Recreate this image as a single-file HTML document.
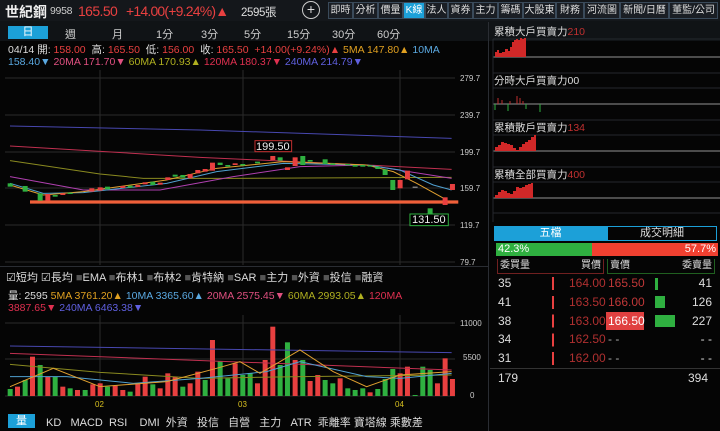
<!DOCTYPE html>
<html><head><meta charset="utf-8"><style>
*{margin:0;padding:0;box-sizing:border-box}
body{width:720px;height:431px;background:#050505;overflow:hidden;position:relative;font-family:"Liberation Sans","Noto Sans CJK TC",sans-serif;color:#ddd}
.a{position:absolute;white-space:nowrap}
.btn{position:absolute;top:2px;height:17px;border:1px solid #3a4a5a;background:#1a1e24;color:#ddd;font-size:10px;line-height:15px;text-align:center}
.r{color:#e84040}.g{color:#2fb040}
</style></head><body>
<div class="a" style="left:0;top:0;width:720px;height:21px;background:#14171b"></div>
<div class="a" style="left:0;top:21px;width:720px;height:20px;background:#101316"></div>
<div class="a" style="left:5px;top:2px;font-size:14px;font-weight:bold;color:#eee">世紀鋼</div>
<div class="a" style="left:50px;top:5px;font-size:10.5px;color:#ccc;letter-spacing:-0.3px">9958</div>
<div class="a r" style="left:78px;top:3px;font-size:14px;letter-spacing:-0.6px">165.50</div>
<div class="a r" style="left:126px;top:3px;font-size:14px;letter-spacing:-0.8px">+14.00(+9.24%)▲</div>
<div class="a" style="left:241px;top:4px;font-size:11.5px;color:#ddd;letter-spacing:-0.4px">2595張</div>
<div class="a" style="left:302px;top:1px;width:18px;height:18px;border:1.5px solid #ccc;border-radius:50%;text-align:center;font-size:14px;line-height:15px;color:#ddd">+</div>
<div class="btn" style="left:328px;width:25px">即時</div>
<div class="btn" style="left:353px;width:25px">分析</div>
<div class="btn" style="left:378px;width:25px">價量</div>
<div class="btn" style="left:403px;width:22px;background:#1ca0d8;color:#fff">K線</div>
<div class="btn" style="left:425px;width:23px">法人</div>
<div class="btn" style="left:448px;width:25px">資券</div>
<div class="btn" style="left:473px;width:25px">主力</div>
<div class="btn" style="left:498px;width:25px">籌碼</div>
<div class="btn" style="left:523px;width:33px">大股東</div>
<div class="btn" style="left:556px;width:28px">財務</div>
<div class="btn" style="left:584px;width:36px">河流圖</div>
<div class="btn" style="left:620px;width:49px">新聞/日曆</div>
<div class="btn" style="left:669px;width:49px">董監/公司</div>

<div class="a" style="left:8px;top:26px;width:40px;height:13px;background:#1ca0d8;color:#fff;font-size:11px;text-align:center;line-height:13px">日</div>
<div class="a" style="left:65px;top:26px;font-size:11px;color:#ccc">週</div>
<div class="a" style="left:112px;top:26px;font-size:11px;color:#ccc">月</div>
<div class="a" style="left:156px;top:26px;font-size:11px;color:#ccc">1分</div>
<div class="a" style="left:201px;top:26px;font-size:11px;color:#ccc">3分</div>
<div class="a" style="left:244px;top:26px;font-size:11px;color:#ccc">5分</div>
<div class="a" style="left:287px;top:26px;font-size:11px;color:#ccc">15分</div>
<div class="a" style="left:332px;top:26px;font-size:11px;color:#ccc">30分</div>
<div class="a" style="left:377px;top:26px;font-size:11px;color:#ccc">60分</div>

<div class="a" style="left:8px;top:42px;font-size:10.5px;color:#ddd">04/14 開: <span class="r">158.00</span> &nbsp;高: <span class="r">165.50</span> &nbsp;低: <span class="r">156.00</span> &nbsp;收: <span class="r">165.50</span> &nbsp;<span class="r">+14.00(+9.24%)▲</span> <span style="color:#e0a020">5MA 147.80▲</span> <span style="color:#5aa8e0">10MA</span></div>
<div class="a" style="left:8px;top:56px;font-size:10.5px"><span style="color:#5aa8e0">158.40▼</span> <span style="color:#e05080">20MA 171.70▼</span> <span style="color:#b0b020">60MA 170.93▲</span> <span style="color:#e03050">120MA 180.37▼</span> <span style="color:#6060e0">240MA 214.79▼</span></div>

<div class="a" style="left:488px;top:22px;width:1px;height:409px;background:#2a2d33"></div>

<svg class="a" style="left:0;top:70px" width="488" height="200">
<g stroke="#2a2a2a" stroke-width="1">
<line x1="5" y1="8" x2="455" y2="8"/><line x1="5" y1="45" x2="455" y2="45"/><line x1="5" y1="82" x2="455" y2="82"/><line x1="5" y1="118" x2="455" y2="118"/><line x1="5" y1="155" x2="455" y2="155"/><line x1="5" y1="192" x2="455" y2="192"/>
<line x1="100" y1="0" x2="100" y2="195"/><line x1="243" y1="0" x2="243" y2="195"/><line x1="400" y1="0" x2="400" y2="195"/>
</g>
<g font-size="8" fill="#ccc"><text x="460" y="11">279.7</text><text x="460" y="48">239.7</text><text x="460" y="85">199.7</text><text x="460" y="121">159.7</text><text x="460" y="158">119.7</text><text x="460" y="195">79.7</text></g>
<g transform="scale(0.3333)" fill="none" stroke-width="3">
<polyline stroke="#4848b0" points="30,168 600,180 1355,205"/>
<polyline stroke="#c03050" points="30,228 600,262 1100,285 1355,298"/>
<polyline stroke="#8a8a20" points="30,272 300,312 430,325 700,325 1355,322"/>
<polyline stroke="#b040b0" points="30,320 250,360 480,360 700,320 900,290 1100,285 1355,325"/>
<polyline stroke="#50a0d0" points="30,340 130,370 250,368 500,340 650,305 850,280 1100,285 1200,300 1300,345 1355,360"/>
<polyline stroke="#e0a030" points="30,345 130,375 250,365 500,330 650,295 850,275 1100,285 1180,305 1250,340 1340,390"/>
<line x1="90" y1="396" x2="1375" y2="396" stroke="#f0603a" stroke-width="10"/>
<g stroke="none">
<rect x="23" y="340" width="15" height="10" fill="#2fb040"/><rect x="68" y="348" width="15" height="17" fill="#2fb040"/><rect x="113" y="370" width="15" height="22" fill="#2fb040"/><rect x="136" y="372" width="15" height="20" fill="#e84040"/><rect x="158" y="375" width="15" height="5" fill="#2fb040"/><rect x="181" y="370" width="15" height="5" fill="#e84040"/><rect x="203" y="368" width="15" height="4" fill="#2fb040"/><rect x="268" y="355" width="15" height="10" fill="#e84040"/><rect x="293" y="352" width="15" height="10" fill="#e84040"/><rect x="315" y="350" width="15" height="8" fill="#2fb040"/><rect x="361" y="348" width="15" height="6" fill="#e84040"/><rect x="383" y="347" width="15" height="6" fill="#2fb040"/><rect x="406" y="345" width="15" height="6" fill="#e84040"/><rect x="428" y="337" width="15" height="6" fill="#e84040"/><rect x="451" y="335" width="15" height="10" fill="#2fb040"/><rect x="473" y="338" width="15" height="6" fill="#e84040"/><rect x="496" y="322" width="15" height="8" fill="#e84040"/><rect x="518" y="314" width="15" height="6" fill="#2fb040"/><rect x="541" y="315" width="15" height="8" fill="#2fb040"/><rect x="563" y="312" width="15" height="13" fill="#e84040"/><rect x="586" y="300" width="15" height="10" fill="#e84040"/><rect x="608" y="297" width="15" height="8" fill="#e84040"/><rect x="630" y="278" width="15" height="24" fill="#e84040"/><rect x="653" y="278" width="15" height="7" fill="#2fb040"/><rect x="676" y="285" width="15" height="5" fill="#2fb040"/><rect x="698" y="280" width="15" height="5" fill="#e84040"/><rect x="721" y="282" width="15" height="5" fill="#2fb040"/><rect x="765" y="275" width="15" height="5" fill="#2fb040"/><rect x="811" y="258" width="15" height="12" fill="#e84040"/><rect x="833" y="262" width="15" height="10" fill="#2fb040"/><rect x="855" y="292" width="15" height="8" fill="#e84040"/><rect x="878" y="262" width="15" height="26" fill="#e84040"/><rect x="901" y="258" width="15" height="27" fill="#2fb040"/><rect x="923" y="270" width="15" height="5" fill="#2fb040"/><rect x="968" y="268" width="15" height="14" fill="#2fb040"/><rect x="991" y="280" width="15" height="5" fill="#2fb040"/><rect x="1036" y="282" width="15" height="4" fill="#2fb040"/><rect x="1058" y="285" width="15" height="5" fill="#2fb040"/><rect x="1081" y="285" width="15" height="5" fill="#2fb040"/><rect x="1103" y="286" width="15" height="4" fill="#2fb040"/><rect x="1126" y="290" width="15" height="7" fill="#2fb040"/><rect x="1148" y="298" width="15" height="17" fill="#2fb040"/><rect x="1171" y="330" width="15" height="30" fill="#2fb040"/><rect x="1193" y="330" width="15" height="25" fill="#e84040"/><rect x="1215" y="302" width="15" height="26" fill="#e84040"/><rect x="1238" y="350" width="15" height="3" fill="#aaa"/><rect x="1283" y="415" width="15" height="17" fill="#2fb040"/><rect x="1328" y="382" width="15" height="23" fill="#e84040"/><rect x="1350" y="342" width="15" height="18" fill="#e84040"/>
</g>
<rect x="765" y="212" width="110" height="33" stroke="#c03030" fill="#000"/>
<rect x="1230" y="432" width="115" height="35" stroke="#2fb040" fill="#000"/>
</g>
<text x="256" y="80" font-size="11" fill="#eee">199.50</text>
<text x="412" y="153" font-size="11" fill="#eee">131.50</text>
</svg>

<div class="a" style="left:0;top:266px;width:488px;height:1px;background:#2a2d33"></div>
<div class="a" style="left:6px;top:269px;font-size:11px;color:#ddd">☑短均 ☑長均 <span style="color:#555">■</span>EMA <span style="color:#555">■</span>布林1 <span style="color:#555">■</span>布林2 <span style="color:#555">■</span>肯特納 <span style="color:#555">■</span>SAR <span style="color:#555">■</span>主力 <span style="color:#555">■</span>外資 <span style="color:#555">■</span>投信 <span style="color:#555">■</span>融資</div>
<div class="a" style="left:8px;top:288px;font-size:10.5px;color:#ddd">量: 2595 <span style="color:#e0a020">5MA 3761.20▲</span> <span style="color:#5aa8e0">10MA 3365.60▲</span> <span style="color:#e05080">20MA 2575.45▼</span> <span style="color:#b0b020">60MA 2993.05▲</span> <span style="color:#e03050">120MA</span></div>
<div class="a" style="left:8px;top:302px;font-size:10.5px"><span style="color:#e03050">3887.65▼</span> <span style="color:#6060e0">240MA 6463.38▼</span></div>

<svg class="a" style="left:0;top:315px" width="488" height="95">
<g stroke="#2a2a2a"><line x1="5" y1="8" x2="455" y2="8"/><line x1="5" y1="44" x2="455" y2="44"/><line x1="5" y1="81" x2="455" y2="81"/><line x1="100" y1="0" x2="100" y2="81"/><line x1="243" y1="0" x2="243" y2="81"/><line x1="400" y1="0" x2="400" y2="81"/></g>
<g font-size="8" fill="#ccc"><text x="460" y="11">11000</text><text x="463" y="45">5500</text><text x="470" y="83">0</text></g>
<g font-size="8" fill="#d8c020"><text x="95" y="92">02</text><text x="238" y="92">03</text><text x="395" y="92">04</text></g>
<g transform="scale(0.3333)">
<g fill="#2fb040"><rect x="23" y="222" width="15" height="21"/><rect x="68" y="195" width="15" height="48"/><rect x="113" y="150" width="15" height="93"/><rect x="158" y="185" width="15" height="58"/><rect x="203" y="220" width="15" height="23"/><rect x="248" y="225" width="15" height="18"/><rect x="315" y="215" width="15" height="28"/><rect x="383" y="230" width="15" height="13"/><rect x="451" y="208" width="15" height="35"/><rect x="541" y="215" width="15" height="28"/><rect x="608" y="195" width="15" height="48"/><rect x="653" y="138" width="15" height="105"/><rect x="676" y="190" width="15" height="53"/><rect x="721" y="180" width="15" height="63"/><rect x="743" y="175" width="15" height="68"/><rect x="833" y="150" width="15" height="93"/><rect x="855" y="82" width="15" height="161"/><rect x="901" y="135" width="15" height="108"/><rect x="968" y="195" width="15" height="48"/><rect x="991" y="205" width="15" height="38"/><rect x="1036" y="220" width="15" height="23"/><rect x="1058" y="225" width="15" height="18"/><rect x="1081" y="220" width="15" height="23"/><rect x="1126" y="222" width="15" height="21"/><rect x="1148" y="192" width="15" height="51"/><rect x="1171" y="162" width="15" height="81"/><rect x="1238" y="240" width="15" height="3"/><rect x="1261" y="155" width="15" height="88"/><rect x="1283" y="165" width="15" height="78"/></g>
<g fill="#e84040"><rect x="45" y="215" width="15" height="28"/><rect x="90" y="125" width="15" height="118"/><rect x="136" y="185" width="15" height="58"/><rect x="181" y="215" width="15" height="28"/><rect x="225" y="225" width="15" height="18"/><rect x="271" y="208" width="15" height="35"/><rect x="293" y="205" width="15" height="38"/><rect x="338" y="212" width="15" height="31"/><rect x="361" y="225" width="15" height="18"/><rect x="406" y="205" width="15" height="38"/><rect x="428" y="185" width="15" height="58"/><rect x="473" y="220" width="15" height="23"/><rect x="496" y="175" width="15" height="68"/><rect x="518" y="185" width="15" height="58"/><rect x="563" y="205" width="15" height="38"/><rect x="586" y="170" width="15" height="73"/><rect x="630" y="75" width="15" height="168"/><rect x="698" y="145" width="15" height="98"/><rect x="765" y="205" width="15" height="38"/><rect x="788" y="135" width="15" height="108"/><rect x="811" y="35" width="15" height="208"/><rect x="878" y="135" width="15" height="108"/><rect x="923" y="198" width="15" height="45"/><rect x="946" y="180" width="15" height="63"/><rect x="1013" y="190" width="15" height="53"/><rect x="1103" y="232" width="15" height="11"/><rect x="1193" y="175" width="15" height="68"/><rect x="1215" y="155" width="15" height="88"/><rect x="1305" y="205" width="15" height="38"/><rect x="1328" y="130" width="15" height="113"/><rect x="1350" y="192" width="15" height="51"/></g>
<g fill="none" stroke-width="3">
<polyline stroke="#4848b0" points="30,93 1355,113"/>
<polyline stroke="#c03050" points="30,115 1355,165"/>
<polyline stroke="#8a8a20" points="30,148 300,172 600,190 900,185 1355,180"/>
<polyline stroke="#50a0d0" points="30,185 200,185 400,205 600,190 800,170 900,140 1100,185 1200,190 1355,175"/>
<polyline stroke="#e0a030" points="30,215 160,160 300,215 500,200 650,160 720,140 780,175 900,105 1000,170 1100,215 1200,180 1355,170"/>
</g></g>
</svg>

<div class="a" style="left:8px;top:414px;width:27px;height:14px;background:#1ca0d8;color:#fff;font-size:11px;text-align:center;line-height:14px">量</div>
<div class="a" style="left:46px;top:414px;font-size:11px;color:#ddd;word-spacing:0">KD &nbsp;&nbsp;MACD &nbsp;RSI &nbsp;&nbsp;&nbsp;DMI &nbsp;外資 &nbsp;&nbsp;投信 &nbsp;&nbsp;自營 &nbsp;&nbsp;主力 &nbsp;&nbsp;ATR &nbsp;乖離率 寶塔線 乘數差</div>

<!-- right panel -->
<svg class="a" style="left:490px;top:22px" width="230" height="200">
<g stroke="#25282d"><line x1="3" y1="17" x2="230" y2="17"/><line x1="3" y1="51" x2="230" y2="51"/><line x1="3" y1="66" x2="230" y2="66"/><line x1="3" y1="98" x2="230" y2="98"/><line x1="3" y1="113" x2="230" y2="113"/><line x1="3" y1="145" x2="230" y2="145"/><line x1="3" y1="160" x2="230" y2="160"/><line x1="3" y1="191" x2="230" y2="191"/></g>
<g stroke="#777" stroke-width="1.3"><line x1="3" y1="35" x2="230" y2="35"/><line x1="3" y1="82" x2="230" y2="82"/><line x1="3" y1="129" x2="230" y2="129"/><line x1="3" y1="176" x2="230" y2="176"/></g>
<line x1="3" y1="17" x2="3" y2="200" stroke="#25282d"/>
<g font-size="10.5" fill="#ddd"><text x="4" y="13">累積大戶買賣力<tspan fill="#c03030">210</tspan></text><text x="4" y="62">分時大戶買賣力00</text><text x="4" y="109">累積散戶買賣力<tspan fill="#c03030">134</tspan></text><text x="4" y="156">累積全部買賣力<tspan fill="#c03030">400</tspan></text></g>
<path d="M5 35V30h2v-2h2v3h3v-1h3v-3h3v2h2v-4h2v-5h2v-2h2v-1h2v1h2v-2h2v1h2v-1h2V35Z" fill="#d02828"/>
<path d="M8 82v-6M12 82v-4M20 82v-3M27 82v-8M30 82v-6M33 82v-3" stroke="#c03030"/>
<path d="M5 82v6M18 82v7M36 82v5M50 82v8" stroke="#2fb040"/>
<path d="M5 129v-4h3v-2h3v-3h3v1h3v1h3v1h3v3h3v2h3v-3h3v-3h3v-2h3v-2h3v-3h3v-2h2V129Z" fill="#d02828"/>
<path d="M5 176v-3h3v-3h3v-2h3v1h3v2h3v1h3v-3h3v-4h3v1h3v-1h3v-2h3v-1h3v-1h2V176Z" fill="#d02828"/>
</svg>

<div class="a" style="left:494px;top:226px;width:113px;height:15px;background:#1ca0d8;color:#fff;font-size:11px;text-align:center;line-height:15px">五檔</div>
<div class="a" style="left:607px;top:226px;width:110px;height:15px;border:1px solid #1ca0d8;color:#ddd;font-size:11px;text-align:center;line-height:13px">成交明細</div>
<div class="a" style="left:496px;top:243px;width:96px;height:13px;background:#2fb040;color:#fff;font-size:11px;line-height:13px;padding-left:2px">42.3%</div>
<div class="a" style="left:592px;top:243px;width:126px;height:13px;background:#f04030;color:#fff;font-size:11px;line-height:13px;text-align:right;padding-right:2px">57.7%</div>
<div class="a" style="left:497px;top:259px;width:107px;height:15px;border:1px solid #702020;border-top:none;font-size:10px;color:#ddd;line-height:13px;padding:0 2px">委買量<span style="float:right">買價</span></div>
<div class="a" style="left:607px;top:259px;width:108px;height:15px;border:1px solid #206020;border-top:none;font-size:10px;color:#ddd;line-height:13px;padding:0 2px">賣價<span style="float:right">委賣量</span></div>
<div class="a" style="left:498px;top:274px;font-size:12px;line-height:18.8px;color:#ddd">35<br>41<br>38<br>34<br>31</div>
<div class="a" style="left:552px;top:277px;width:2px;height:92px;background:repeating-linear-gradient(#e84040 0 13px,transparent 13px 18.8px)"></div>
<div class="a r" style="left:569px;top:274px;font-size:12px;line-height:18.8px;color:#b03030">164.00<br>163.50<br>163.00<br>162.50<br>162.00</div>
<div class="a" style="left:606px;top:312px;width:38px;height:18px;background:#e04040"></div>
<div class="a" style="left:608px;top:274px;font-size:12px;line-height:18.8px;color:#c03838">165.50<br>166.00<br><span style="color:#fff">166.50</span><br><span style="color:#aaa">- -</span><br><span style="color:#aaa">- -</span></div>
<div class="a" style="left:655px;top:278px;width:3px;height:12px;background:#2fb040"></div>
<div class="a" style="left:655px;top:296px;width:10px;height:12px;background:#2fb040"></div>
<div class="a" style="left:655px;top:315px;width:20px;height:12px;background:#2fb040"></div>
<div class="a" style="left:680px;top:274px;width:32px;font-size:12px;line-height:18.8px;color:#ddd;text-align:right">41<br>126<br>227<br>- -<br>- -</div>
<div class="a" style="left:490px;top:368px;width:230px;height:1px;background:#333"></div>
<div class="a" style="left:498px;top:371px;font-size:12px;color:#ddd">179</div>
<div class="a" style="left:688px;top:371px;font-size:12px;color:#ddd">394</div>
</body></html>
